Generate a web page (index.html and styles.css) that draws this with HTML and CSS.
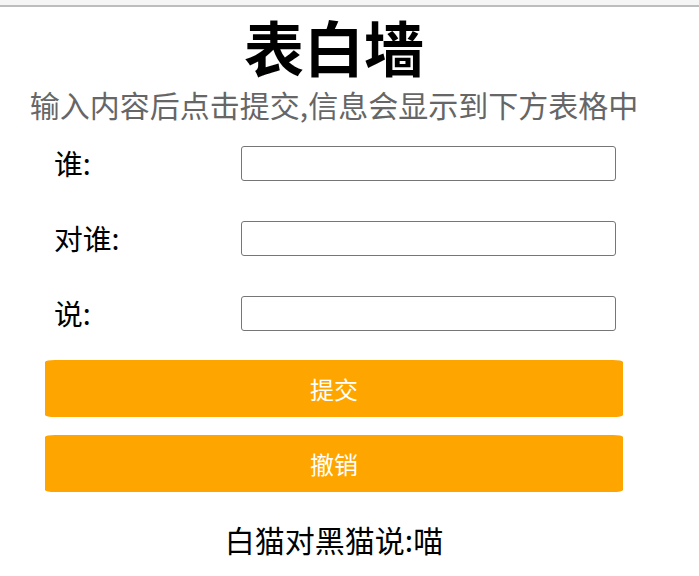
FILE: index.html
```html
<html>
	<head>
		<meta charset="utf-8">
		<title>表白墙</title>
		<link rel="stylesheet" href="styles.css">
	</head>
	<body>
		<div class="topbar"></div>
		<div class="wrap">
			<h1 class="title">表白墙</h1>
			<p class="hint">输入内容后点击提交,信息会显示到下方表格中</p>
			<div class="form">
				<div class="row">
					<span class="label">谁:</span>
					<input type="text" class="field" id="from">
				</div>
				<div class="row">
					<span class="label">对谁:</span>
					<input type="text" class="field" id="to">
				</div>
				<div class="row">
					<span class="label">说:</span>
					<input type="text" class="field" id="msg">
				</div>
				<button class="btn" id="submit">提交</button>
				<button class="btn" id="revert">撤销</button>
			</div>
			<div class="messages" id="messages">
				<div class="message">白猫对黑猫说:喵</div>
			</div>
		</div>
	</body>
</html>
```

FILE: styles.css
```css
body {
	margin: 0;
	background: white;
	color: black;
	font-family: "Noto Sans CJK SC", "Noto Sans", sans-serif;
}

.topbar {
	height: 5px;
	background: #f5f5f5;
	border-bottom: 2px solid #bdbdbd;
}

.wrap {
	width: 668px;
	text-align: center;
}

.title {
	margin: 8px 0 0 0;
	font-size: 60px;
	line-height: 62px;
	font-weight: bold;
}

.hint {
	margin: 9px 0 0 0;
	font-size: 30px;
	line-height: 36px;
	color: #666;
	white-space: nowrap;
}

.form {
	width: 578px;
	margin: 23px 0 0 45px;
	text-align: left;
}

.row {
	display: flex;
	align-items: center;
	height: 36px;
	padding-left: 9px;
	margin-bottom: 39px;
}

.label {
	width: 187px;
	font-size: 28.8px;
	line-height: 36px;
}

.field {
	width: 375px;
	height: 35px;
	margin: 0;
	padding: 0 6px;
	box-sizing: border-box;
	border: 1px solid #767676;
	border-radius: 3px;
	font-size: 20px;
}

.btn {
	display: block;
	width: 578px;
	height: 57px;
	margin: 0 0 18px 0;
	padding: 0;
	border: none;
	border-radius: 10px / 2px;
	background: orange;
	color: white;
	font-family: "Noto Sans CJK SC", "Noto Sans", sans-serif;
	font-size: 24px;
}

.btn:first-of-type {
	margin-top: -10px;
}

.messages {
	margin-top: 28px;
}

.message {
	font-size: 30px;
	line-height: 38px;
}
```
